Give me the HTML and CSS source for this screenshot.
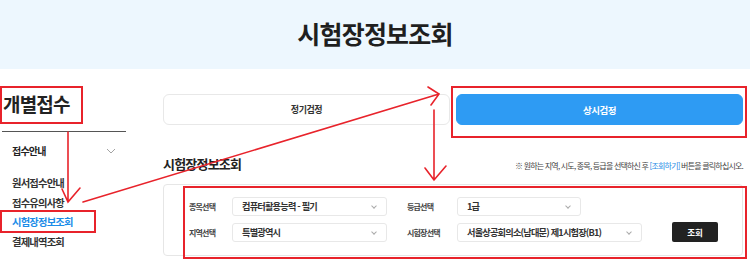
FILE: index.html
```html
<!DOCTYPE html>
<html lang="ko">
<head>
    <meta charset="UTF-8">
    <meta name="viewport" content="width=device-width, initial-scale=1.0">
    <title>시험장정보조회</title>
    <link rel="stylesheet" href="styles.css">
</head>
<body>
    <header class="page-head">
        <h1>시험장정보조회</h1>
    </header>

    <div class="layout">
        <aside class="side">
            <h2 class="side-title">개별접수</h2>
            <div class="side-group">
                <span>접수안내</span>
                <svg class="chevron" width="10" height="6" viewBox="0 0 10 6"><path d="M1 1l4 4 4-4" fill="none" stroke="#999" stroke-width="0.9"/></svg>
            </div>
            <ul class="side-menu">
                <li>원서접수안내</li>
                <li>접수유의사항</li>
                <li class="current">시험장정보조회</li>
                <li>결제내역조회</li>
            </ul>
        </aside>

        <main class="content">
            <div class="tabs">
                <button class="tab">정기검정</button>
                <button class="tab active">상시검정</button>
            </div>

            <div class="section-head">
                <h3>시험장정보조회</h3>
                <p class="hint">※ 원하는 지역, 시도, 종목, 등급을 선택하신 후 <span class="hint-link">[조회하기]</span> 버튼을 클릭하십시오.</p>
            </div>

            <div class="search-box">
                <div class="search-row">
                    <label class="label">종목선택</label>
                    <div class="select sel-wide">컴퓨터활용능력 - 필기<i class="arrow"></i></div>
                    <label class="label label-2">등급선택</label>
                    <div class="select sel-grade">1급<i class="arrow"></i></div>
                </div>
                <div class="search-row">
                    <label class="label">지역선택</label>
                    <div class="select sel-wide">특별광역시<i class="arrow"></i></div>
                    <label class="label label-2">시험장선택</label>
                    <div class="select sel-place">서울상공회의소(남대문) 제1시험장(B1)<i class="arrow"></i></div>
                    <button class="search-btn">조회</button>
                </div>
            </div>
        </main>
    </div>

    <!-- 빨간 표시 (주석용 오버레이) -->
    <svg class="marks" width="750" height="263" viewBox="0 0 750 263">
        <g fill="none" stroke="#e8232b" stroke-width="2">
            <rect x="1" y="87" width="81" height="36"/>
            <rect x="1" y="211" width="94" height="21"/>
            <rect x="452" y="87" width="294" height="50"/>
            <rect x="184" y="187" width="562" height="71"/>
        </g>
        <g fill="none" stroke="#e8232b" stroke-width="1.6" stroke-linecap="round">
            <path d="M68 132V202M62 189l6 13 12-14"/>
            <path d="M83 202L439 94M428 87l11 7-8 11"/>
            <path d="M434 110V180M425 168l9 12 12-14"/>
        </g>
    </svg>
</body>
</html>
```

FILE: styles.css
```css
body {
    font-family: "Noto Sans CJK KR", "Noto Sans", sans-serif;
    margin: 0;
    color: #222;
    background: #fff;
    letter-spacing: -0.05em;
    position: relative;
    width: 750px;
    height: 263px;
    overflow: hidden;
}
.page-head {
    height: 69px;
    background-color: #edf7fe;
    display: flex;
    align-items: center;
    justify-content: center;
}
.page-head h1 {
    margin: 0;
    font-size: 25px;
    font-weight: 700;
    color: #1f1f1f;
    padding-bottom: 3px;
}
.layout {
    display: flex;
    padding: 0 7px 0 2px;
}
.side {
    width: 124px;
    flex: none;
}
.side-title {
    margin: 23px 0 0;
    font-size: 19px;
    line-height: 24px;
    font-weight: 700;
    padding: 0 0 15px 1px;
    border-bottom: 1px solid #555;
}
.side-group {
    margin-top: 11px;
    display: flex;
    justify-content: space-between;
    align-items: center;
    padding: 0 10px 0 10px;
    font-size: 10px;
    line-height: 16px;
    font-weight: 700;
}
.side-menu {
    list-style: none;
    margin: 14px 0 0;
    padding: 0 0 0 10px;
    font-size: 10.3px;
    line-height: 19.7px;
    font-weight: 700;
    color: #333;
}
.side-menu .current { color: #1b8ce8; }
.content {
    flex: 1;
    margin-left: 37px;
}
.tabs {
    display: flex;
    gap: 6px;
    margin-top: 25px;
}
.tab {
    flex: 1;
    height: 31px;
    border: 1px solid #e8e8e8;
    border-radius: 6px;
    background: #fff;
    font-family: inherit;
    font-size: 9px;
    font-weight: 700;
    color: #333;
    letter-spacing: -0.05em;
    cursor: pointer;
}
.tab.active {
    background-color: #2e9bf3;
    border-color: #2e9bf3;
    color: #fff;
    font-size: 9.5px;
}
.section-head {
    display: flex;
    justify-content: space-between;
    align-items: flex-end;
    margin-top: 31px;
}
.section-head h3 {
    margin: 0;
    font-size: 13px;
    line-height: 16px;
    font-weight: 700;
}
.hint {
    margin: 0 0 1px;
    font-size: 8px;
    line-height: 10px;
    color: #444;
}
.hint-link { color: #2a8de6; }
.search-box {
    margin-top: 12px;
    border: 1px solid #e6e6e6;
    border-radius: 4px;
    padding: 12px 0 13px 25px;
    display: flex;
    flex-direction: column;
    gap: 6px;
}
.search-row {
    display: flex;
    align-items: center;
}
.label {
    width: 43px;
    font-size: 8px;
    font-weight: 700;
    color: #444;
}
.label-2 {
    width: 50px;
    margin-left: 20px;
}
.select {
    position: relative;
    height: 19px;
    box-sizing: border-box;
    border: 1px solid #e8e8e8;
    border-radius: 3px;
    padding-left: 9px;
    font-size: 9.2px;
    line-height: 17px;
    font-weight: 700;
    color: #333;
}
.sel-wide { width: 155px; }
.sel-grade { width: 124px; }
.sel-place { width: 185px; }
.arrow {
    position: absolute;
    right: 10px;
    top: 6px;
    width: 3px;
    height: 3px;
    border-right: 1px solid #aaa;
    border-bottom: 1px solid #aaa;
    transform: rotate(45deg);
}
.search-btn {
    margin-left: 30px;
    width: 46px;
    height: 20px;
    border: none;
    border-radius: 2px;
    background-color: #222;
    color: #fff;
    font-family: inherit;
    font-size: 8.5px;
    font-weight: 700;
}
.marks {
    position: absolute;
    left: 0;
    top: 0;
    pointer-events: none;
}
```
